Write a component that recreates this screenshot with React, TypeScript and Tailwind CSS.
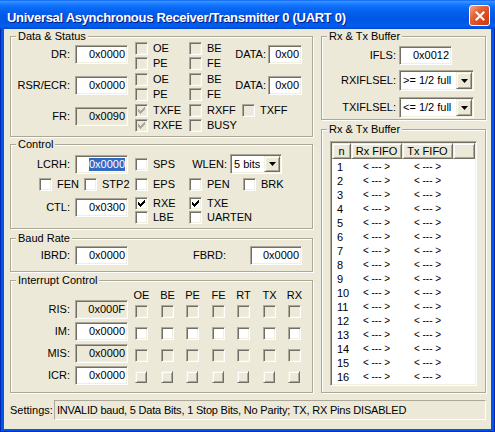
import React from 'react'

const sunken =
  'border border-t-[#ACA899] border-l-[#ACA899] border-b-white border-r-white shadow-[inset_1px_1px_0_#716F64,inset_-1px_-1px_0_#F1EFE2]'
const raised =
  'border border-t-[#F1EFE2] border-l-[#F1EFE2] border-b-[#716F64] border-r-[#716F64] shadow-[inset_1px_1px_0_#FFFFFF,inset_-1px_-1px_0_#ACA899]'

// column tops of the classic 7x7 check mark, each column 3px tall
const CHECK_TOPS = [2, 3, 4, 3, 2, 1, 0]

function Box({ checked = false, disabled = false }: { checked?: boolean; disabled?: boolean }) {
  return (
    <span
      className={`flex h-[13px] w-[13px] shrink-0 items-center justify-center ${sunken} ${
        disabled ? 'bg-[#ECE9D8]' : 'bg-white'
      }`}
    >
      {checked && (
        <svg width="7" height="7" viewBox="0 0 7 7" shapeRendering="crispEdges">
          {CHECK_TOPS.map((t, i) => (
            <rect key={i} x={i} y={t} width="1" height="3" fill={disabled ? '#ACA899' : '#000000'} />
          ))}
        </svg>
      )}
    </span>
  )
}

function Check({
  label,
  checked,
  disabled,
  className = ''
}: {
  label: string
  checked?: boolean
  disabled?: boolean
  className?: string
}) {
  return (
    <div className={`flex h-[13px] shrink-0 items-center ${className}`}>
      <Box checked={checked} disabled={disabled} />
      <span className="ml-[5px] whitespace-nowrap leading-[13px]">{label}</span>
    </div>
  )
}

function Edit({
  value,
  readOnly,
  selected,
  className = ''
}: {
  value: string
  readOnly?: boolean
  selected?: boolean
  className?: string
}) {
  return (
    <div
      className={`flex h-[19px] shrink-0 items-center justify-end pr-[2px] ${sunken} ${
        readOnly ? 'bg-[#ECE9D8]' : 'bg-white'
      } ${className}`}
    >
      <span className={`leading-[13px] ${selected ? 'bg-[#316AC5] text-white' : ''}`}>{value}</span>
    </div>
  )
}

function Label({ children, className = '' }: { children: React.ReactNode; className?: string }) {
  return (
    <div className={`flex h-[19px] shrink-0 items-center justify-end whitespace-nowrap ${className}`}>
      {children}
    </div>
  )
}

function Combo({ value, className = '' }: { value: string; className?: string }) {
  return (
    <div className={`flex shrink-0 items-stretch bg-white p-[1px] ${sunken} ${className}`}>
      <span className="flex-1 self-center whitespace-nowrap pl-[2px] leading-[13px]">{value}</span>
      <span className={`flex w-[16px] items-center justify-center bg-[#ECE9D8] ${raised}`}>
        <svg width="7" height="4" viewBox="0 0 7 4">
          <path d="M0 0h7L3.5 4z" fill="#000000" />
        </svg>
      </span>
    </div>
  )
}

function Group({
  title,
  className = '',
  children
}: {
  title: string
  className?: string
  children: React.ReactNode
}) {
  return (
    <fieldset
      className={`min-w-0 border border-[#ACA899] shadow-[inset_1px_1px_0_#FFFFFF,1px_1px_0_#FFFFFF] ${className}`}
    >
      <legend className="ml-[5px] bg-[#ECE9D8] px-[2px] leading-[13px]">{title}</legend>
      {children}
    </fieldset>
  )
}

const INT_COLS = ['OE', 'BE', 'PE', 'FE', 'RT', 'TX', 'RX']
const INT_COL_W = ['w-[26px]', 'w-[25px]', 'w-[26px]', 'w-[25px]', 'w-[26px]', 'w-[25px]', 'w-[13px]']

const INT_ROWS = [
  { label: 'RIS:', value: '0x000F', kind: 'ro' },
  { label: 'IM:', value: '0x0000', kind: 'rw' },
  { label: 'MIS:', value: '0x0000', kind: 'ro' },
  { label: 'ICR:', value: '0x0000', kind: 'btn' }
]

const FIFO_ROWS = Array.from({ length: 16 }, (_, i) => i + 1)

export default function App() {
  return (
    <div className="flex h-[432px] w-[495px] flex-col bg-[#0055EA] font-['Liberation_Sans',Arial,sans-serif] text-[11px] text-black shadow-[inset_1px_0_0_#0028B0,inset_-1px_0_0_#0028B0,inset_0_-1px_0_#0028B0]">
      {/* Title bar */}
      <div className="flex h-[29px] shrink-0 bg-[linear-gradient(180deg,#0058EE_0%,#3A93FF_4%,#2C8CFF_8%,#1677FF_16%,#0A6AF5_28%,#035FEB_44%,#0058E6_60%,#0057E5_76%,#0060F2_88%,#0052DD_96%,#0044CC_100%)] pl-[7px] pr-[5px]">
        <span className="mt-[11px] self-start whitespace-nowrap text-[13px] font-bold leading-[13px] tracking-[-0.3px] text-white [text-shadow:1px_1px_0_#0A1883]">
          Universal Asynchronous Receiver/Transmitter 0 (UART 0)
        </span>
        <div className="ml-auto mt-[5px] flex h-[21px] w-[21px] items-center justify-center self-start rounded-[3px] border border-white bg-[linear-gradient(135deg,#F3A78C_0%,#E5643A_35%,#D8481C_70%,#C23C10_100%)]">
          <svg width="10" height="10" viewBox="0 0 10 10">
            <path d="M1.5 1.5L8.5 8.5M8.5 1.5L1.5 8.5" stroke="#FFFFFF" strokeWidth="2" strokeLinecap="square" />
          </svg>
        </div>
      </div>

      {/* Client area */}
      <div className="mx-[4px] flex h-[400px] flex-col bg-[#ECE9D8] pl-[6px] pr-[5px]">
        <div className="flex gap-[8px]">
          {/* Left column */}
          <div className="flex w-[303px] flex-col">
            <Group title="Data & Status" className="mt-[1px] h-[107px]">
              <div className="mt-[-1px] flex flex-col">
                <div className="flex h-[31px] items-start">
                  <Label className="mt-[3px] w-[59px]">DR:</Label>
                  <Edit value="0x0000" className="ml-[5px] mt-[3px] w-[53px]" />
                  <div className="ml-[7px] flex w-[54px] flex-col gap-[2px]">
                    <Check label="OE" disabled />
                    <Check label="PE" disabled />
                  </div>
                  <div className="flex w-[40px] flex-col gap-[2px]">
                    <Check label="BE" disabled />
                    <Check label="FE" disabled />
                  </div>
                  <Label className="mt-[3px] w-[37px]">DATA:</Label>
                  <Edit value="0x00" className="ml-[2px] mt-[3px] w-[34px]" />
                </div>
                <div className="flex h-[31px] items-start">
                  <Label className="mt-[3px] w-[59px]">RSR/ECR:</Label>
                  <Edit value="0x0000" className="ml-[5px] mt-[3px] w-[53px]" />
                  <div className="ml-[7px] flex w-[54px] flex-col gap-[2px]">
                    <Check label="OE" disabled />
                    <Check label="PE" disabled />
                  </div>
                  <div className="flex w-[40px] flex-col gap-[2px]">
                    <Check label="BE" disabled />
                    <Check label="FE" disabled />
                  </div>
                  <Label className="mt-[3px] w-[37px]">DATA:</Label>
                  <Edit value="0x00" className="ml-[2px] mt-[3px] w-[34px]" />
                </div>
                <div className="flex h-[31px] items-start">
                  <Label className="mt-[3px] w-[59px]">FR:</Label>
                  <Edit value="0x0090" readOnly className="ml-[5px] mt-[3px] w-[53px]" />
                  <div className="ml-[7px] flex w-[54px] flex-col gap-[2px]">
                    <Check label="TXFE" checked disabled />
                    <Check label="RXFE" checked disabled />
                  </div>
                  <div className="flex w-[53px] flex-col gap-[2px]">
                    <Check label="RXFF" disabled />
                    <Check label="BUSY" disabled />
                  </div>
                  <Check label="TXFF" disabled />
                </div>
              </div>
            </Group>

            <Group title="Control" className="mt-[1px] h-[91px]">
              <div className="flex flex-col pt-[3px]">
                <div className="flex h-[20px] items-center">
                  <Label className="w-[59px]">LCRH:</Label>
                  <Edit value="0x0000" selected className="ml-[5px] w-[53px]" />
                  <Check label="SPS" className="ml-[7px] w-[54px]" />
                  <Label className="w-[38px]">WLEN:</Label>
                  <Combo value="5 bits" className="ml-[3px] h-[20px] w-[52px]" />
                </div>
                <div className="mt-[4px] flex items-center pl-[28px]">
                  <Check label="FEN" className="w-[45px]" />
                  <Check label="STP2" className="w-[51px]" />
                  <Check label="EPS" className="w-[54px]" />
                  <Check label="PEN" className="w-[54px]" />
                  <Check label="BRK" />
                </div>
                <div className="mt-[6px] flex items-start">
                  <Label className="mt-[1px] w-[59px]">CTL:</Label>
                  <Edit value="0x0300" className="ml-[5px] mt-[1px] w-[53px]" />
                  <div className="ml-[7px] flex w-[54px] flex-col gap-[1px]">
                    <Check label="RXE" checked />
                    <Check label="LBE" />
                  </div>
                  <div className="flex flex-col gap-[1px]">
                    <Check label="TXE" checked />
                    <Check label="UARTEN" />
                  </div>
                </div>
              </div>
            </Group>

            <Group title="Baud Rate" className="mt-[3px] h-[40px]">
              <div className="mt-[1px] flex items-center">
                <Label className="w-[59px]">IBRD:</Label>
                <Edit value="0x0000" className="ml-[5px] w-[53px]" />
                <div className="ml-[65px] w-[57px]">FBRD:</div>
                <Edit value="0x0000" className="w-[52px]" />
              </div>
            </Group>

            <Group title="Interrupt Control" className="mt-[2px] h-[119px]">
              <div className="mt-[2px] flex h-[13px] pl-[124px] leading-[13px]">
                {INT_COLS.map((c, i) => (
                  <div key={c} className={INT_COL_W[i]}>
                    <div className="flex w-[13px] justify-center">{c}</div>
                  </div>
                ))}
              </div>
              <div className="mt-[-2px] flex flex-col gap-[3px]">
                {INT_ROWS.map(row => (
                  <div key={row.label} className="flex h-[19px] items-start">
                    <Label className="w-[59px]">{row.label}</Label>
                    <Edit value={row.value} readOnly={row.kind === 'ro'} className="ml-[5px] w-[53px]" />
                    <div className="ml-[7px] mt-[5px] flex">
                      {INT_COLS.map((c, i) => (
                        <div key={c} className={INT_COL_W[i]}>
                          {row.kind === 'btn' ? (
                            <span className={`block h-[12px] w-[12px] bg-[#ECE9D8] ${raised}`} />
                          ) : (
                            <Box disabled={row.kind === 'ro'} />
                          )}
                        </div>
                      ))}
                    </div>
                  </div>
                ))}
              </div>
            </Group>
          </div>

          {/* Right column */}
          <div className="flex w-[165px] flex-col">
            <Group title="Rx & Tx Buffer" className="mt-[1px] h-[90px]">
              <div className="flex flex-col pt-[3px]">
                <div className="flex items-center">
                  <Label className="w-[74px]">IFLS:</Label>
                  <Edit value="0x0012" className="ml-[3px] w-[53px]" />
                </div>
                <div className="mt-[5px] flex items-center">
                  <Label className="h-[21px] w-[74px]">RXIFLSEL:</Label>
                  <Combo value=">= 1/2 full" className="ml-[3px] h-[21px] w-[75px]" />
                </div>
                <div className="mt-[6px] flex items-center">
                  <Label className="h-[21px] w-[74px]">TXIFLSEL:</Label>
                  <Combo value="<= 1/2 full" className="ml-[3px] h-[21px] w-[75px]" />
                </div>
              </div>
            </Group>

            <Group title="Rx & Tx Buffer" className="mt-[3px] h-[270px]">
              <div className={`ml-[8px] mt-[5px] flex h-[245px] w-[147px] flex-col overflow-hidden bg-white p-[1px] ${sunken}`}>
                <div className="flex h-[16px] shrink-0 leading-[13px]">
                  <div className={`flex w-[19px] items-center justify-center bg-[#ECE9D8] ${raised}`}>n</div>
                  <div className={`flex w-[51px] items-center justify-center bg-[#ECE9D8] ${raised}`}>Rx FIFO</div>
                  <div className={`flex w-[51px] items-center justify-center bg-[#ECE9D8] ${raised}`}>Tx FIFO</div>
                  <div className={`flex-1 bg-[#ECE9D8] ${raised}`} />
                </div>
                <div className="flex flex-col pt-[1px]">
                  {FIFO_ROWS.map(n => (
                    <div key={n} className="flex h-[14px] items-center leading-[14px]">
                      <div className="w-[19px] pl-[5px]">{n}</div>
                      <div className="w-[51px] text-center text-[10px]">&lt; --- &gt;</div>
                      <div className="w-[51px] text-center text-[10px]">&lt; --- &gt;</div>
                    </div>
                  ))}
                </div>
              </div>
            </Group>
          </div>
        </div>

        {/* Settings line */}
        <div className="mt-[7px] flex h-[20px] items-center">
          <div className="w-[44px] whitespace-nowrap">Settings:</div>
          <div className="flex h-full flex-1 items-center whitespace-nowrap border border-t-[#ACA899] border-l-[#ACA899] border-b-white border-r-white pl-[2px] tracking-[-0.2px]">
            INVALID baud, 5 Data Bits, 1 Stop Bits, No Parity; TX, RX Pins DISABLED
          </div>
        </div>
      </div>
    </div>
  )
}
